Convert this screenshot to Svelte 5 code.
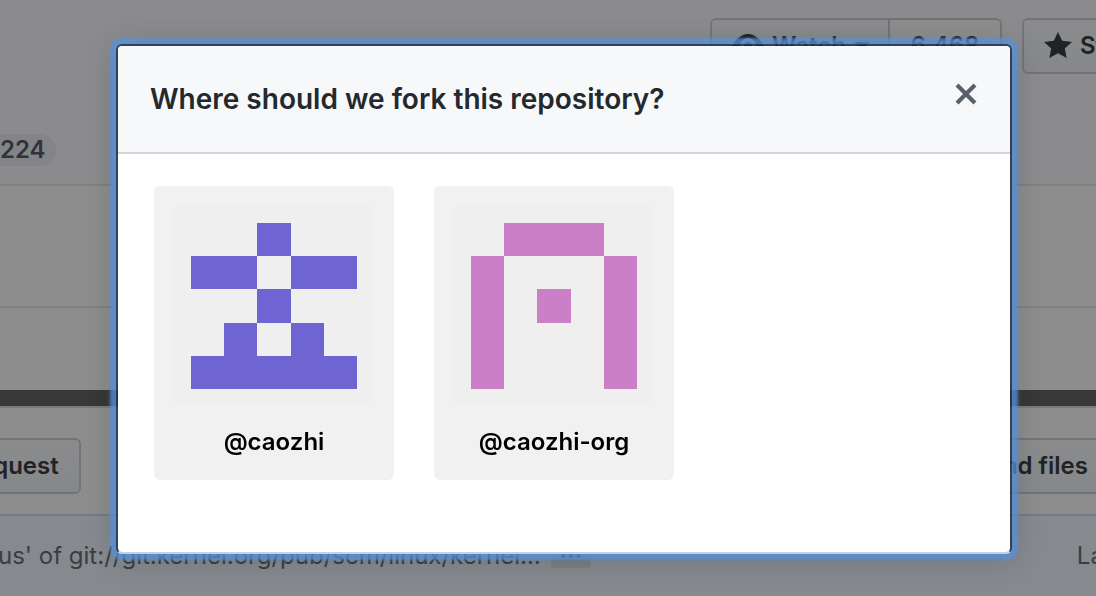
<script>
  const targets = [
    { name: '@caozhi', color: '#6e64d2', rows: ['00100', '11011', '00100', '01010', '11111'] },
    { name: '@caozhi-org', color: '#ca7fc6', rows: ['01110', '10001', '10101', '10001', '10001'] }
  ];

  // Joins neighbouring filled cells of a row into one bar.
  function bars(rows) {
    return rows.flatMap((row, y) =>
      [...row.matchAll(/1+/g)].map((m) => ({ x: m.index, y, w: m[0].length }))
    );
  }
</script>

<div class="page">
  <header class="repo-head">
    <div class="actions">
      <div class="group">
        <button class="btn watch" type="button">
          <svg width="32" height="32" viewBox="0 0 16 16" aria-hidden="true"><path fill-rule="evenodd" d="M8.06 2C3 2 0 8 0 8s3 6 8.06 6C13 14 16 8 16 8s-3-6-7.94-6zM8 12c-2.2 0-4-1.78-4-4 0-2.2 1.8-4 4-4 2.22 0 4 1.8 4 4 0 2.22-1.78 4-4 4zm2-4c0 1.11-.89 2-2 2-1.11 0-2-.89-2-2 0-1.11.89-2 2-2 1.11 0 2 .89 2 2z" /></svg>
          Watch
          <span class="caret"></span>
        </button>
        <a class="btn count" href="#watchers">6,468</a>
      </div>
      <button class="btn star" type="button">
        <svg width="28" height="32" viewBox="0 0 14 16" aria-hidden="true"><path d="M14 6l-4.9-.64L7 1 4.9 5.36 0 6l3.6 3.26L2.67 14 7 11.67 11.33 14l-.93-4.74L14 6z" /></svg>
        Star
      </button>
    </div>
    <nav class="tabs"><span class="pill">224</span></nav>
  </header>
  <div class="about"></div>
  <div class="stats"></div>
  <div class="language"></div>
  <div class="tools">
    <button class="btn request" type="button">request</button>
    <button class="btn files" type="button">Find files</button>
  </div>
  <div class="commit">
    <span class="message">us' of git://git.kernel.org/pub/scm/linux/kernel…</span>
    <button class="more" type="button">…</button>
    <span class="latest">Latest</span>
  </div>
</div>

<div class="overlay">
  <div class="dialog" role="dialog" aria-modal="true" aria-labelledby="fork-title">
    <div class="dialog-head">
      <h1 id="fork-title">Where should we fork this repository?</h1>
      <button class="close" type="button" aria-label="Close">
        <svg width="24" height="32" viewBox="0 0 12 16" aria-hidden="true"><path d="M7.48 8l3.75 3.75-1.48 1.48L6 9.48l-3.75 3.75-1.48-1.48L4.52 8 .77 4.25l1.48-1.48L6 6.52l3.75-3.75 1.48 1.48L7.48 8z" /></svg>
      </button>
    </div>
    <div class="targets">
      {#each targets as t}
        <button class="target" type="button">
          <svg width="200" height="200" viewBox="0 0 420 420" aria-hidden="true">
            <rect width="420" height="420" rx="8" fill="#efefef" />
            <g fill={t.color} shape-rendering="crispEdges">
              {#each bars(t.rows) as b}
                <rect x={35 + b.x * 70} y={35 + b.y * 70} width={b.w * 70} height="70" />
              {/each}
            </g>
          </svg>
          <span>{t.name}</span>
        </button>
      {/each}
    </div>
  </div>
</div>

<style>
  :global(body) {
    margin: 0;
    overflow: hidden;
    font-family: Inter, "Liberation Sans", sans-serif;
    font-size: 24px;
    line-height: 36px;
    color: #24292e;
    background: #fff;
  }
  * { box-sizing: border-box; }
  button { font: inherit; color: inherit; cursor: pointer; }
  svg { fill: currentColor; flex: none; }

  .page {
    display: flex;
    flex-direction: column;
    height: 100vh;
    overflow: hidden;
  }
  .repo-head {
    flex: none;
    background: #fafbfc;
    border-bottom: 2px solid #e1e4e8;
    padding: 18px 0;
  }
  .actions {
    display: flex;
    justify-content: flex-end;
    gap: 20px;
    margin-right: -42px;
  }
  .group { display: flex; }
  .btn {
    display: flex;
    align-items: center;
    gap: 8px;
    height: 56px;
    padding: 0 20px;
    border: 2px solid #cbcdd0;
    border-radius: 6px;
    background: linear-gradient(#fafbfc, #eff3f6);
    font-weight: 600;
    white-space: nowrap;
  }
  .watch { width: 180px; border-radius: 6px 0 0 6px; }
  .caret {
    border: 8px solid transparent;
    border-top-color: currentColor;
    border-bottom: 0;
  }
  .count {
    width: 112px;
    justify-content: center;
    border-left: 0;
    border-radius: 0 6px 6px 0;
    background: #fff;
    color: inherit;
    text-decoration: none;
  }
  .star { width: 116px; }
  .tabs { display: flex; margin: 60px 0 0 -20px; }
  .pill {
    padding: 0 10px 0 20px;
    border-radius: 16px;
    background: #ebecee;
    line-height: 32px;
    font-weight: 600;
    color: #444d56;
  }
  .about { flex: none; height: 122px; border-bottom: 2px solid #e1e4e8; }
  .stats { flex: none; height: 82px; }
  .language {
    flex: none;
    height: 18px;
    background: #555;
    border-bottom: 2px solid #ddd;
  }
  .tools {
    flex: none;
    display: flex;
    justify-content: space-between;
    padding: 30px 0 20px;
    margin: 0 -14px 0 -52px;
  }
  .commit {
    flex: 1;
    display: flex;
    align-items: flex-start;
    background: #f1f8ff;
    border-top: 2px solid #c8d9f5;
    padding-top: 22px;
    color: #586069;
    white-space: nowrap;
    margin: 0 -60px 0 -2px;
  }
  .more {
    width: 40px;
    height: 24px;
    margin: 6px 0 0 10px;
    padding: 0 0 12px;
    border: 0;
    border-radius: 2px;
    background: #dfe2e5;
    line-height: 0;
    font-weight: 600;
    color: #444d56;
  }
  .latest { margin-left: auto; padding-right: 10px; }

  .overlay {
    position: fixed;
    inset: 0;
    padding: 44px 84px 0 116px;
    background: rgba(27, 28, 30, 0.5);
  }
  .dialog {
    border: 2px solid rgba(32, 40, 50, 0.75);
    border-bottom: 2px solid #c3d3e3;
    border-radius: 6px;
    background: #fff;
    background-clip: padding-box;
    box-shadow:
      0 0 3px 6px rgba(84, 146, 220, 0.75),
      0 4px 30px rgba(20, 20, 20, 0.22);
  }
  .dialog-head {
    display: flex;
    justify-content: space-between;
    align-items: flex-start;
    padding: 32px;
    background: #f6f8fa;
    border-bottom: 2px solid #d1d5da;
    border-radius: 4px 4px 0 0;
  }
  h1 {
    margin: 0;
    font-size: 28px;
    line-height: 42px;
    font-weight: 600;
  }
  .close {
    display: flex;
    padding: 0;
    border: 0;
    background: none;
    color: #586069;
  }
  .targets {
    display: flex;
    flex-wrap: wrap;
    gap: 40px;
    padding: 32px 36px 72px;
  }
  .target {
    display: flex;
    flex-direction: column;
    align-items: center;
    gap: 18px;
    width: 240px;
    padding: 20px;
    border: 0;
    border-radius: 6px;
    background: #f1f1f1;
    font-weight: 600;
    color: #000;
  }
</style>
